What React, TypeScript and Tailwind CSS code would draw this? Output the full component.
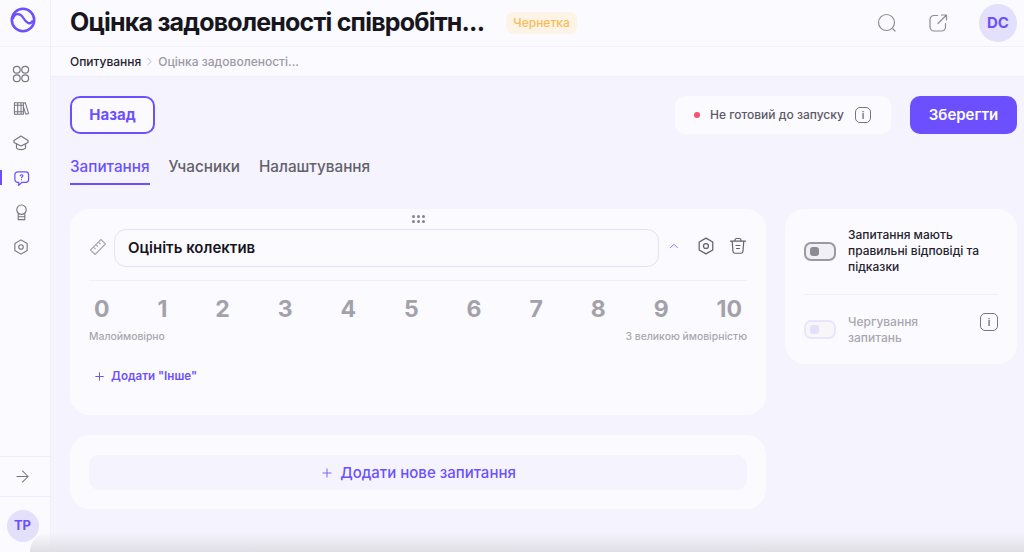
import { ArrowRight, ChevronUp, ChevronRight, Plus } from 'lucide-react'

const font = { fontFamily: 'Inter, sans-serif' }

function Icon({ d, className }: { d: string; className?: string }) {
  return (
    <svg viewBox="0 0 24 24" fill="none" stroke="currentColor" strokeWidth="1.5" strokeLinecap="round" strokeLinejoin="round" className={className}>
      <path d={d} />
    </svg>
  )
}

const hexagon = 'M12 2.5l8.2 4.75v9.5L12 21.5l-8.2-4.75v-9.5L12 2.5zM12 9a3 3 0 100 6 3 3 0 000-6z'

function InfoBox({ className }: { className: string }) {
  return (
    <span className={`flex items-center justify-center rounded-[5px] border-[1.5px] border-[#77757f] text-[10px] leading-none font-medium text-[#5b5964] ${className}`}>
      i
    </span>
  )
}

function Sidebar() {
  return (
    <aside className="flex w-[51px] shrink-0 flex-col border-r border-[#f0eefc] bg-[#fbfaff]">
      <div className="flex h-[47px] items-start justify-center border-b border-[#f3f1fd] pt-[7px] pr-[5px]">
        <svg viewBox="0 0 26 26" className="h-[26px] w-[26px]" fill="none" stroke="#6c50ff" strokeWidth="2.6">
          <circle cx="13" cy="13" r="11.200" />
          <path d="M3 12C4 6 10 5.500 13 10.500s7 8.500 10 3" strokeWidth="2.300" />
        </svg>
      </div>
      <nav className="flex flex-col gap-[12.700px] pt-[16px] text-[#77757f]">
        <div className="flex h-[22px] items-center justify-center pr-[8px]">
          <svg viewBox="0 0 18 18" className="h-[18px] w-[18px]" fill="none" stroke="currentColor" strokeWidth="1.200">
            <circle cx="4.800" cy="4.800" r="3.400" />
            <circle cx="13.200" cy="4.800" r="3.400" />
            <circle cx="4.800" cy="13.200" r="3.400" />
            <circle cx="13.200" cy="13.200" r="3.400" />
          </svg>
        </div>
        <div className="flex h-[22px] items-center justify-center pr-[8px]">
          <svg viewBox="0 0 18 18" className="h-[17px] w-[17px]" fill="none" stroke="currentColor" strokeWidth="1.100" strokeLinejoin="round">
            <path d="M1.500 3h3.500v12H1.500zM5 3h3.500v12H5zM8.500 3H11v12H8.500zM11 3.400l2-.6 3.500 11.400-3 .8L11 7M1.500 5.500h9.500M1.500 12.500h9.500" />
          </svg>
        </div>
        <div className="flex h-[22px] items-center justify-center pr-[8px]">
          <svg viewBox="0 0 18 18" className="h-[18px] w-[18px]" fill="none" stroke="currentColor" strokeWidth="1.200" strokeLinejoin="round" strokeLinecap="round">
            <path d="M9 2L16 6.500v2L9 12 2 8.500v-2L9 2z" />
            <path d="M4.500 10v4c1.500 2.200 7.500 2.200 9 0v-4" />
          </svg>
        </div>
        <div className="relative flex h-[22px] items-center justify-center pr-[8px] text-[#6c50ff]">
          <span className="absolute top-[3px] left-0 h-[15px] w-[1.500px] bg-[#6c50ff]" />
          <svg viewBox="0 0 18 18" className="h-[17px] w-[17px]" fill="none" stroke="currentColor" strokeWidth="1.300" strokeLinejoin="round">
            <path d="M5 2h8.500a3 3 0 013 3v5a3 3 0 01-3 3H9.500L6 16.300V13H5a3 3 0 01-3-3V5a3 3 0 013-3z" />
            <path d="M7.700 6c.3-1.300 2.700-1.300 2.800.1 0 1.100-1.500 1-1.500 2.100M9 10.200v.1" strokeLinecap="round" />
          </svg>
        </div>
        <div className="flex h-[22px] items-center justify-center pr-[8px]">
          <svg viewBox="0 0 18 18" className="h-[17px] w-[17px]" fill="none" stroke="currentColor" strokeWidth="1.200" strokeLinejoin="round">
            <circle cx="9" cy="6" r="5" />
            <path d="M5.500 10v6.500h7V10M5.500 13.500h7" />
          </svg>
        </div>
        <div className="flex h-[22px] items-center justify-center pr-[8px]">
          <Icon d={hexagon} className="h-[18px] w-[18px]" />
        </div>
      </nav>
      <div className="mt-auto flex h-[41px] items-center justify-center border-y border-[#f0eefc] pr-[5px] text-[#77757f]">
        <ArrowRight className="h-[19px] w-[19px]" strokeWidth={1.300} />
      </div>
      <div className="flex h-[55px] items-start justify-center pt-[13px] pr-[5px]">
        <span className="flex h-[32px] w-[32px] items-center justify-center rounded-full bg-[#e3e0fc] text-[13px] font-bold text-[#6c50ff]">TP</span>
      </div>
    </aside>
  )
}

export default function App() {
  return (
    <div style={font} className="relative flex h-[552px] w-[1024px] overflow-hidden bg-[#f5f4fe] text-[#17161d]">
      <Sidebar />
      <main className="flex min-w-0 flex-1 flex-col">
        <header className="flex h-[47px] shrink-0 items-center border-b border-[#f3f1fd] bg-[#fbfaff] pr-[7px] pl-[19px]">
          <h1 className="text-[25px] font-bold tracking-[-0.8px] whitespace-nowrap">Оцінка задоволеності співробітн...</h1>
          <span className="ml-[22px] rounded-[7px] bg-[#fdf4e7] px-[7px] py-[2px] text-[12px] font-medium text-[#fabb55]">Чернетка</span>
          <div className="ml-auto flex items-center text-[#8d8b94]">
            <svg viewBox="0 0 20 20" className="h-[20px] w-[20px]" fill="none" stroke="currentColor" strokeWidth="1.200" strokeLinecap="round">
              <circle cx="9.500" cy="9.500" r="8" />
              <path d="M16 16l2 2" />
            </svg>
            <svg viewBox="0 0 20 20" className="ml-[31px] h-[20px] w-[20px]" fill="none" stroke="currentColor" strokeWidth="1.200" strokeLinecap="round" strokeLinejoin="round">
              <path d="M9.500 2.500H6a4 4 0 00-4 4V14a4 4 0 004 4h7.500a4 4 0 004-4v-3.500M10 10.500l8-8M13.500 2H18.500V7" />
            </svg>
            <span className="ml-[31px] flex h-[38px] w-[38px] items-center justify-center rounded-full bg-[#e3e0fc] text-[15px] font-bold text-[#6c50ff]">DC</span>
          </div>
        </header>
        <div className="flex h-[30px] shrink-0 items-center border-b border-[#f0eefc] bg-[#fbfaff] pl-[19px] text-[12px] font-medium">
          <span className="text-[#25232c]">Опитування</span>
          <ChevronRight className="mx-[2px] h-[13px] w-[13px] text-[#a9a7b0]" strokeWidth={1.500} />
          <span className="text-[#9b99a3]">Оцінка задоволеності...</span>
        </div>

        <div className="flex flex-1 flex-col pr-[7px] pl-[19px]">
          <div className="flex items-center pt-[19px]">
            <button className="flex h-[38px] w-[85px] items-center justify-center rounded-[10px] border-2 border-[#6c50ff] bg-[#fbfaff] text-[15px] font-bold text-[#6c50ff]">Назад</button>
            <div className="ml-auto flex h-[38px] w-[216px] items-center rounded-[10px] bg-[#fbfaff] pl-[19px] text-[12px] font-medium text-[#5b5964]">
              <span className="h-[6px] w-[6px] rounded-full bg-[#fb4f72]" />
              <span className="ml-[10px]">Не готовий до запуску</span>
              <InfoBox className="ml-[11px] h-[16px] w-[16px]" />
            </div>
            <button className="ml-[19px] h-[38px] w-[107px] rounded-[10px] bg-[#6c50ff] text-[15px] font-semibold text-white">Зберегти</button>
          </div>

          <div className="mt-[22px] flex gap-[19px] text-[15.300px] leading-[21px] font-medium text-[#63616b]">
            <span className="border-b-2 border-[#6c50ff] pb-[6px] text-[#6c50ff]">Запитання</span>
            <span>Учасники</span>
            <span>Налаштування</span>
          </div>

          <div className="mt-[24px] flex items-start gap-[19px]">
            <div className="w-[696px] shrink-0">
              <section className="relative h-[206px] rounded-[20px] bg-[#fbfaff] px-[19px]">
                <div className="absolute top-[6px] left-[342px] grid grid-cols-3 gap-[2px]">
                  {[0, 1, 2, 3, 4, 5].map((i) => (
                    <span key={i} className="h-[3px] w-[3px] rounded-full bg-[#85838c]" />
                  ))}
                </div>
                <div className="flex items-center border-b border-[#f0eefc] pt-[20px] pb-[13px]">
                  <svg viewBox="0 0 18 18" className="mb-[2px] h-[18px] w-[18px] shrink-0 text-[#a9a7b0]" fill="none" stroke="currentColor" strokeWidth="1.100" strokeLinejoin="round" strokeLinecap="round">
                    <path d="M1.500 12L12 1.500l4.500 4.500L6 16.500 1.500 12zM4.500 9l1.800 1.800M7 6.500l1.800 1.800M9.500 4l1.800 1.800" />
                  </svg>
                  <div className="ml-[7px] flex h-[38px] w-[547px] items-center rounded-[12px] border-[1.500px] border-[#e3e0fc] bg-[#fbfaff] pt-[1px] pl-[13px] text-[15px] font-semibold">Оцініть колектив</div>
                  <ChevronUp className="mb-[4px] ml-[8px] h-[14px] w-[14px] text-[#6c50ff]" strokeWidth={1.300} />
                  <Icon d={hexagon} className="mb-[4px] ml-[15px] h-[20px] w-[20px] text-[#63616b]" />
                  <svg viewBox="0 0 18 18" className="mb-[4px] ml-[13px] h-[18px] w-[18px] text-[#63616b]" fill="none" stroke="currentColor" strokeWidth="1.200" strokeLinecap="round" strokeLinejoin="round">
                    <path d="M1.500 4.200h15M6 4V2.800A1.500 1.500 0 017.500 1.500h3A1.500 1.500 0 0112 2.800V4M3.200 4.500l.8 10a2 2 0 002 1.800h6a2 2 0 002-1.800l.8-10M7 8.500h4M7.500 11.500h3" />
                  </svg>
                </div>
                <div className="flex justify-between px-[5px] pt-[15px] text-[23px] leading-[26px] font-bold text-[#a3a1aa]">
                  {[0, 1, 2, 3, 4, 5, 6, 7, 8, 9, 10].map((n) => (
                    <span key={n}>{n}</span>
                  ))}
                </div>
                <div className="mt-[7px] flex justify-between text-[10.400px] font-medium text-[#a9a7b0]">
                  <span>Малоймовірно</span>
                  <span>З великою ймовірністю</span>
                </div>
                <div className="mt-[23px] flex items-center pl-[4px] text-[11.600px] font-semibold text-[#6c50ff]">
                  <Plus className="mr-[5px] h-[13px] w-[13px]" strokeWidth={1.800} />
                  Додати "Інше"
                </div>
              </section>
              <section className="mt-[20px] rounded-[20px] bg-[#fbfaff] px-[19px] pt-[20px] pb-[19px]">
                <div className="flex h-[35px] items-center justify-center rounded-[10px] bg-[#f5f4fe] pt-[1px] text-[15px] font-medium text-[#6c50ff]">
                  <Plus className="mr-[6px] h-[14px] w-[14px]" strokeWidth={1.500} />
                  Додати нове запитання
                </div>
              </section>
            </div>

            <aside className="h-[155px] w-[232px] rounded-[20px] bg-[#fbfaff] px-[19px] pt-[18px]">
              <div className="flex border-b border-[#f0eefc] pb-[19px]">
                <span className="mt-[15px] flex h-[19px] w-[32px] shrink-0 items-center rounded-[7px] border-2 border-[#9a98a2] bg-[#f1f0f4] pl-[4px]">
                  <span className="h-[9px] w-[9px] rounded-[3px] bg-[#8d8b94]" />
                </span>
                <p className="ml-[12px] text-[12px] leading-[16px] font-medium text-[#25232c]">Запитання мають правильні відповіді та підказки</p>
              </div>
              <div className="flex pt-[19px]">
                <span className="mt-[6px] flex h-[19px] w-[32px] shrink-0 items-center rounded-[7px] border-2 border-[#e8e5fd] bg-[#f9f6f9] pl-[4px]">
                  <span className="h-[9px] w-[9px] rounded-[3px] bg-[#e3e0fc]" />
                </span>
                <p className="ml-[12px] text-[12px] leading-[16px] font-medium text-[#a9a7b0]">Чергування<br />запитань</p>
                <InfoBox className="mt-[-1px] ml-auto h-[18px] w-[18px]" />
              </div>
            </aside>
          </div>
        </div>
      </main>
      <div className="pointer-events-none absolute right-0 bottom-0 left-[30px] h-[20px] rounded-tl-[40px] bg-gradient-to-b from-[#f5f4fe]/0 to-[#e0dfe6]" />
    </div>
  )
}
